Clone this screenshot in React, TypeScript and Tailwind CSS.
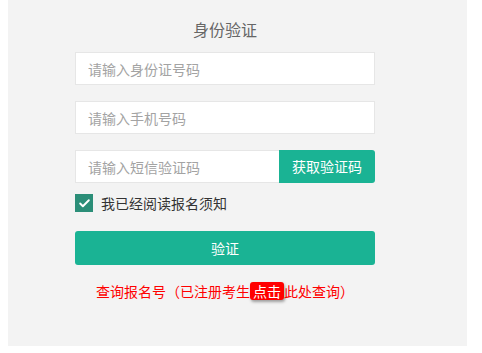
import { Check } from "lucide-react";

const font = { fontFamily: '"Microsoft YaHei", "Noto Sans CJK SC", sans-serif' };

function Field({ placeholder }: { placeholder: string }) {
  return (
    <input
      className="block w-[300px] h-[33px] border border-[#e6e6e6] bg-white pl-[12px] text-[14px] text-[#333] placeholder:text-[#a3a3a3] outline-none"
      placeholder={placeholder}
    />
  );
}

export default function App() {
  return (
    <div className="bg-white h-[353px]" style={font}>
      <div className="ml-[8px] w-[459px] h-[346px] bg-[#f3f3f3] pt-[17px] pl-[67px]">
        <div className="w-[300px]">
          <h2 className="text-center text-[16px] leading-[24px] text-[#666]">身份验证</h2>
          <div className="mt-[11px] flex flex-col gap-[16px]">
            <Field placeholder="请输入身份证号码" />
            <Field placeholder="请输入手机号码" />
            <div className="flex">
              <input
                className="block w-[204px] h-[33px] border border-r-0 border-[#e6e6e6] bg-white pl-[12px] text-[14px] placeholder:text-[#a3a3a3] outline-none"
                placeholder="请输入短信验证码"
              />
              <button className="w-[96px] h-[33px] bg-[#1ab394] text-white text-[14px] rounded-r-[3px]">
                获取验证码
              </button>
            </div>
          </div>
          <label className="mt-[11px] flex items-center gap-[8px] h-[18px]">
            <span className="w-[18px] h-[18px] bg-[#2b8e78] flex items-center justify-center">
              <Check className="w-[13px] h-[13px] text-white" strokeWidth={3.5} />
            </span>
            <span className="text-[14px] text-[#333]">我已经阅读报名须知</span>
          </label>
          <button className="mt-[19px] w-[300px] h-[34px] bg-[#1ab394] text-white text-[14px] rounded-[3px]">
            验证
          </button>
          <p className="mt-[16px] text-center text-[14px] leading-[20px] text-[#ff0000] [text-spacing-trim:space-all]">
            查询报名号（已注册考生
            <span className="inline-block bg-[#ff0000] text-white px-[3px] rounded-[3px] leading-[18px] shadow-[1px_2px_3px_rgba(0,0,0,0.35)]">点击</span>
            此处查询）
          </p>
        </div>
      </div>
    </div>
  );
}
